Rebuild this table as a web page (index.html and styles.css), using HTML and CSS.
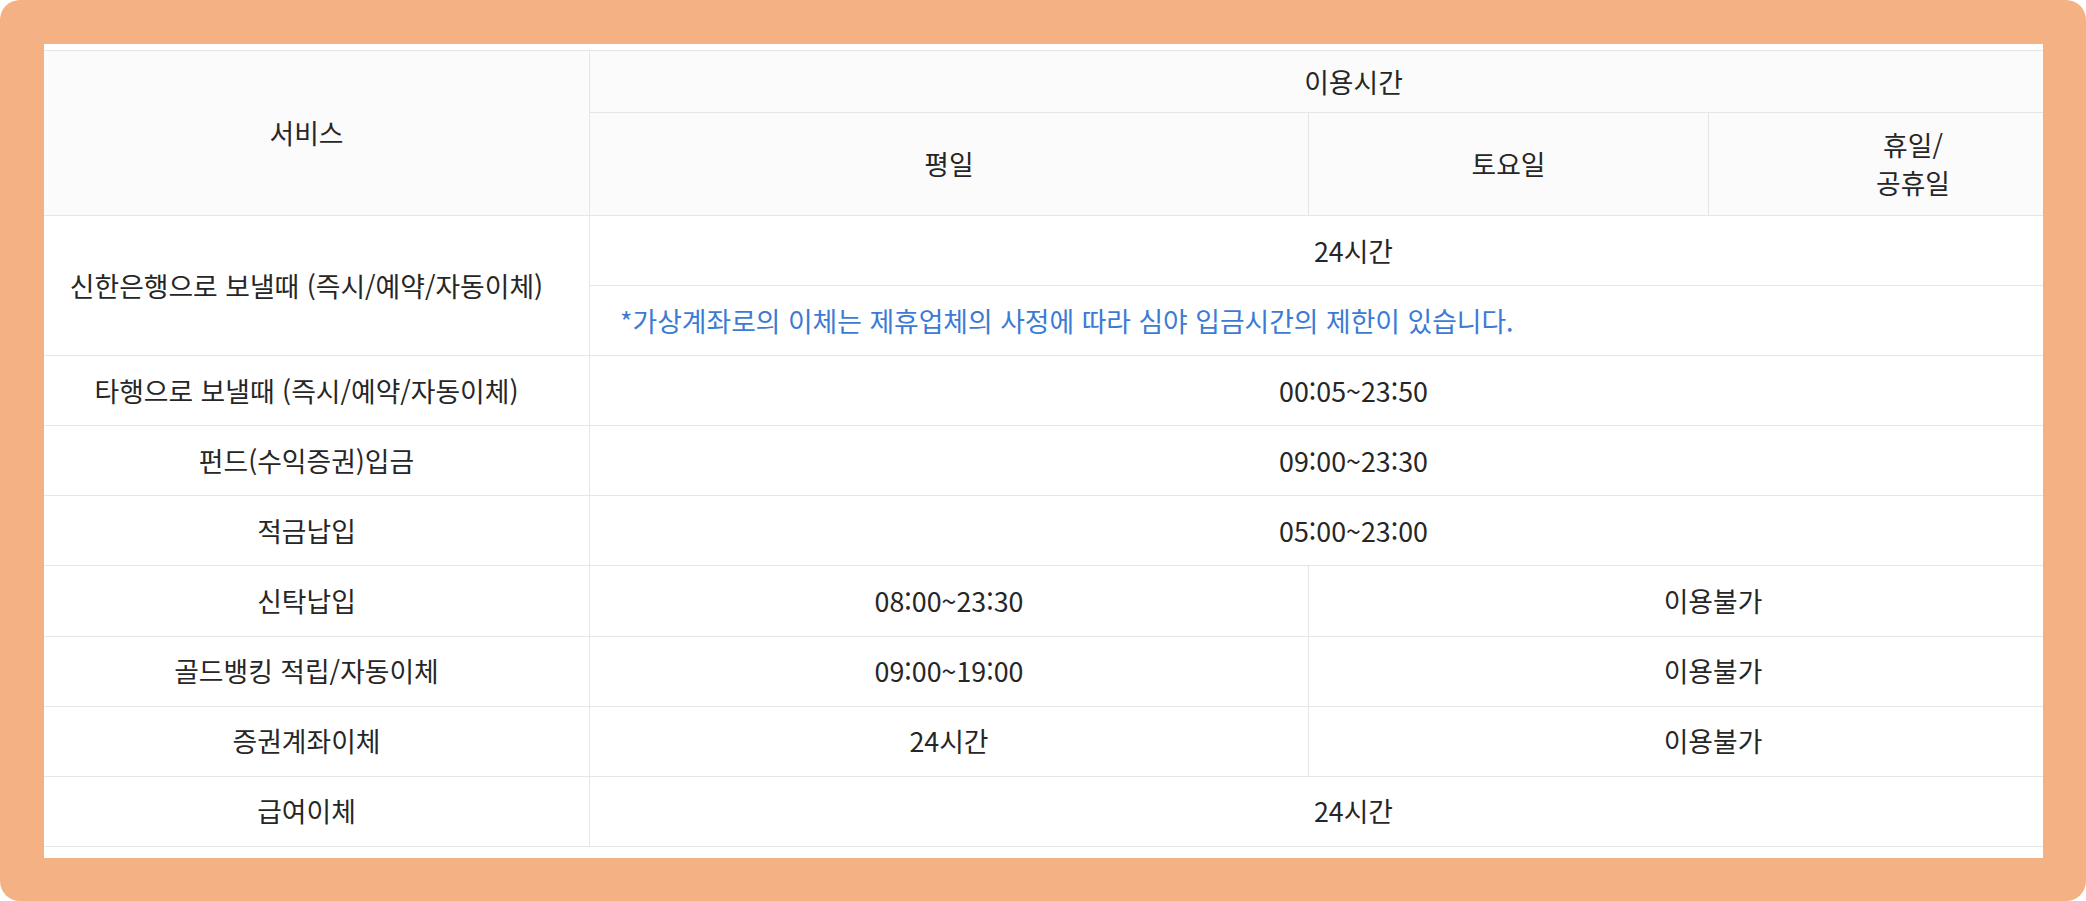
FILE: index.html
```html
<!DOCTYPE html>
<html lang="ko">
<head>
<meta charset="utf-8">
<title>이용시간</title>
<link rel="stylesheet" href="styles.css">
</head>
<body>
<div class="frame">
  <div class="sheet">
    <table class="hours">
      <colgroup>
        <col class="c-svc">
        <col class="c-week">
        <col class="c-sat">
        <col class="c-hol">
      </colgroup>
      <thead>
        <tr class="r-h1">
          <th rowspan="2">서비스</th>
          <th colspan="3">이용시간</th>
        </tr>
        <tr class="r-h2">
          <th>평일</th>
          <th>토요일</th>
          <th>휴일/<br>공휴일</th>
        </tr>
      </thead>
      <tbody>
        <tr class="r">
          <td rowspan="2">신한은행으로 보낼때 (즉시/예약/자동이체)</td>
          <td colspan="3">24시간</td>
        </tr>
        <tr class="r">
          <td colspan="3" class="note">*가상계좌로의 이체는 제휴업체의 사정에 따라 심야 입금시간의 제한이 있습니다.</td>
        </tr>
        <tr class="r">
          <td>타행으로 보낼때 (즉시/예약/자동이체)</td>
          <td colspan="3">00:05~23:50</td>
        </tr>
        <tr class="r">
          <td>펀드(수익증권)입금</td>
          <td colspan="3">09:00~23:30</td>
        </tr>
        <tr class="r">
          <td>적금납입</td>
          <td colspan="3">05:00~23:00</td>
        </tr>
        <tr class="r">
          <td>신탁납입</td>
          <td>08:00~23:30</td>
          <td colspan="2">이용불가</td>
        </tr>
        <tr class="r">
          <td>골드뱅킹 적립/자동이체</td>
          <td>09:00~19:00</td>
          <td colspan="2">이용불가</td>
        </tr>
        <tr class="r">
          <td>증권계좌이체</td>
          <td>24시간</td>
          <td colspan="2">이용불가</td>
        </tr>
        <tr class="r">
          <td>급여이체</td>
          <td colspan="3">24시간</td>
        </tr>
      </tbody>
    </table>
  </div>
</div>
</body>
</html>
```

FILE: styles.css
```css
html, body {
  margin: 0;
  padding: 0;
  background: #ffffff;
}

.frame {
  width: 2086px;
  height: 901px;
  box-sizing: border-box;
  padding: 44px 43px 43px 44px;
  background: #f4b183;
  border-radius: 20px;
}

.sheet {
  width: 100%;
  height: 100%;
  background: #ffffff;
  overflow: hidden;
  padding-top: 6px;
  box-sizing: border-box;
}

.hours {
  margin-left: -21px;
  width: 2094px;
  table-layout: fixed;
  border-collapse: collapse;
  border-top: 1px solid #c9c9c9;
  font-family: "Noto Sans CJK KR", "Noto Sans", sans-serif;
  font-size: 26.8px;
  line-height: 38px;
  color: #262626;
}

.c-svc { width: 566px; }
.c-week { width: 719px; }
.c-sat { width: 400px; }
.c-hol { width: 409px; }

.hours th,
.hours td {
  border: 1px solid #e6e6e6;
  text-align: center;
  vertical-align: middle;
  padding: 0;
  font-weight: normal;
}

.hours th {
  background: #fbfbfb;
}

.r-h1 { height: 62px; }
.r-h2 { height: 103px; }
.r { height: 70.1px; }

.hours td.note {
  text-align: left;
  padding-left: 30px;
  color: #3b7bd4;
}
```
